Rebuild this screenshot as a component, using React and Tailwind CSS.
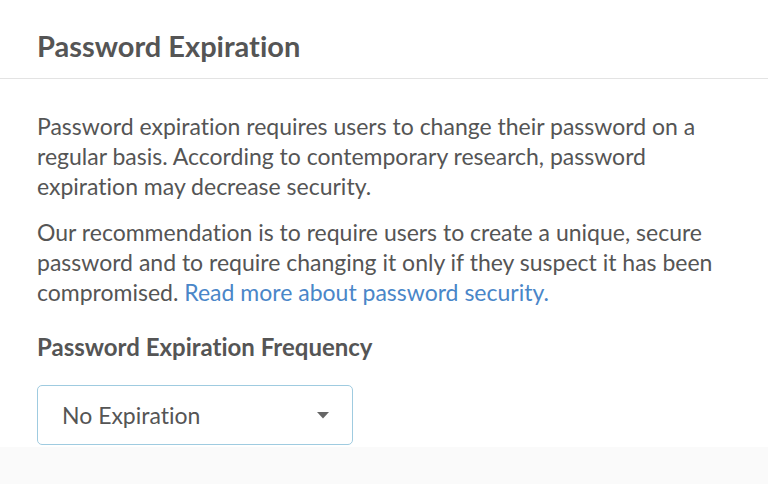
export default function App() {
  return (
    <div className="w-[768px] h-[484px] bg-[#fafafa] font-['Lato',sans-serif] text-[#555] overflow-hidden [font-variant-ligatures:none]">
      <div className="bg-white">
        <div className="h-[79px] border-b border-[#e3e3e3] px-[37px] pt-[27px]">
          <h1 className="text-[29px] font-bold leading-[38px] text-[#555]">Password Expiration</h1>
        </div>
        <div className="px-[37px] pt-[32px] pb-[2px]">
          <p className="text-[23px] leading-[30px] w-[700px]">
            Password expiration requires users to change their password on a regular basis. According to contemporary
            research, password expiration may decrease security.
          </p>
          <p className="mt-[16px] text-[23px] leading-[30px] w-[700px]">
            Our recommendation is to require users to create a unique, secure password and to require changing it only
            if they suspect it has been compromised.{" "}
            <a href="#" className="text-[#4a86c8]">
              Read more about password security.
            </a>
          </p>
          <h2 className="mt-[25px] text-[24px] font-bold leading-[30px]">Password Expiration Frequency</h2>
          <div className="mt-[23px] w-[316px] h-[60px] rounded-[5px] border border-[#9fcbe0] flex items-center justify-between pl-[24px] pr-[23px]">
            <span className="text-[23px]">No Expiration</span>
            <svg width="12" height="7" viewBox="0 0 12 7" className="fill-[#666]">
              <path d="M0 0h12L6 6.5z" />
            </svg>
          </div>
        </div>
      </div>
    </div>
  );
}
